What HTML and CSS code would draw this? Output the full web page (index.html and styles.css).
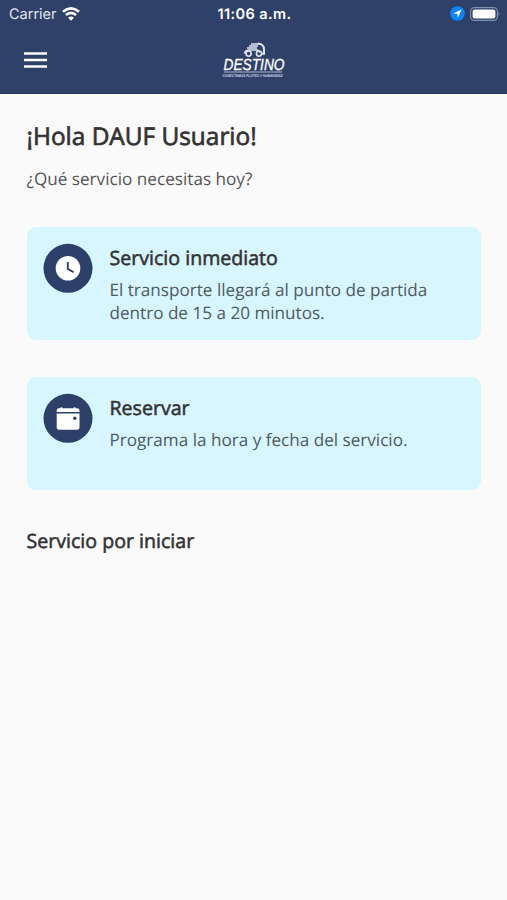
FILE: index.html
```html
<!DOCTYPE html>
<html lang="es">
<head>
<meta charset="utf-8">
<meta name="viewport" content="width=device-width, initial-scale=1">
<title>Destino</title>
<link rel="stylesheet" href="styles.css">
</head>
<body>
<header class="header">
  <div class="status">
    <div class="status-left">
      <span class="carrier">Carrier</span>
      <svg class="wifi" width="18" height="14" viewBox="0 0 18 14" fill="none" stroke="#fff" stroke-width="2.6">
        <path d="M1 4.8Q9-2.1 17 4.8M3.9 8.1Q9 3.7 14.1 8.1"/>
        <path d="M9 13.8L6.1 10.7Q9 8.2 11.9 10.7Z" fill="#fff" stroke="none"/>
      </svg>
    </div>
    <span class="time">11:06 a.m.</span>
    <div class="status-right">
      <svg width="15" height="15" viewBox="0 0 15 15"><circle cx="7.5" cy="7.5" r="7.3" fill="#0b84fe"/><path d="M11.6 3.4L3 7.4L7.3 7.8L7.7 12Z" fill="#fff"/></svg>
      <svg width="30" height="14" viewBox="0 0 30 14"><rect x=".6" y=".6" width="26.8" height="12.8" rx="3.8" fill="none" stroke="#8390ad" stroke-width="1.1"/><rect x="2.6" y="2.5" width="22.8" height="9" rx="2.2" fill="#fff"/><path d="M28.5 4.8Q30.4 7 28.5 9.2Z" fill="#8390ad"/></svg>
    </div>
  </div>
  <div class="toolbar">
    <svg class="menu" width="23" height="16" viewBox="0 0 23 16"><path d="M0 1.5H23M0 8H23M0 14.5H23" stroke="#fff" stroke-width="2.6"/></svg>
    <svg class="logo" width="66" height="38" viewBox="0 0 66 38">
      <g fill="none" stroke="#dfe6f4">
        <path d="M23.5 12.5Q24 9.3 28 9H36L39 11" stroke-width="1.7"/>
        <path d="M26 7H36M28 5H37M30 3H39" stroke-width="1.3"/>
        <path d="M37 2.4Q43.2 3 43 8.5V12.7H41" stroke-width="2"/>
        <circle cx="27.6" cy="12.6" r="2.6" stroke-width="1.6"/><circle cx="38" cy="12.6" r="2.6" stroke-width="1.6"/>
      </g>
      <text class="logo-name" x="2.5" y="29" textLength="61" lengthAdjust="spacingAndGlyphs">DESTINO</text>
      <path d="M3 31H61" stroke="#c9d2e5" stroke-width=".8"/>
      <text class="logo-tag" x="1.5" y="35.6" textLength="60" lengthAdjust="spacingAndGlyphs">CONECTAMOS FLOTES Y HUMANIDAD</text>
    </svg>
  </div>
</header>
<main class="content">
  <h1 class="greeting">¡Hola DAUF Usuario!</h1>
  <p class="question">¿Qué servicio necesitas hoy?</p>
  <section class="card">
    <svg class="icon" width="50" height="50" viewBox="0 0 50 50"><circle cx="25" cy="25.3" r="24.5" fill="#2d4069"/><circle cx="25" cy="25.3" r="12.3" fill="#fff"/><path d="M24.8 19.1V25.9L30.6 29.3" fill="none" stroke="#2d4069" stroke-width="1.9"/></svg>
    <div class="card-text">
      <h2 class="heading">Servicio inmediato</h2>
      <p class="description">El transporte llegará al punto de partida<br>dentro de 15 a 20 minutos.</p>
    </div>
  </section>
  <section class="card">
    <svg class="icon" width="50" height="50" viewBox="0 0 50 50"><circle cx="25" cy="25.3" r="24.5" fill="#2d4069"/><path d="M13.7 19V17.5Q13.7 15.2 16 15.2H17.6V14.2H19.3V15.2H30.7V14.2H32.4V15.2H34Q36.5 15.2 36.5 17.5V19ZM13.7 20.5H36.5V34Q36.5 36.7 34 36.7H16Q13.7 36.7 13.7 34Z" fill="#fff"/><circle cx="31.8" cy="25.2" r="1.7" fill="#2d4069"/></svg>
    <div class="card-text">
      <h2 class="heading">Reservar</h2>
      <p class="description">Programa la hora y fecha del servicio.</p>
    </div>
  </section>
  <h2 class="heading pending">Servicio por iniciar</h2>
</main>
</body>
</html>
```
FILE: styles.css
```css
* { box-sizing: border-box; }
body {
  margin: 0;
  min-height: 900px;
  background: #fafafa;
  color: #333;
  font-family: "Open Sans", sans-serif;
  text-rendering: geometricPrecision;
}
h1, h2, p { margin: 0; font-weight: 400; }
svg { display: block; flex: none; }
.header { height: 94px; background: #2f4168; border-bottom: 1px solid #26385f; }
.status {
  height: 27px;
  padding: 0 7px 0 9px;
  display: grid;
  grid-template-columns: 1fr auto 1fr;
  align-items: center;
  color: #fff;
  font-family: Inter, sans-serif;
}
.status-left, .status-right { display: flex; align-items: center; }
.status-left { gap: 5px; }
.status-right { justify-content: flex-end; gap: 5px; }
.carrier { padding-top: 1px; font-size: 14.5px; color: #e3e7f0; }
.time { padding-top: 1px; font-size: 14.5px; font-weight: 600; letter-spacing: .4px; }
.toolbar {
  height: 66px;
  padding: 0 24px;
  display: grid;
  grid-template-columns: 1fr auto 1fr;
  align-items: center;
}
.logo { overflow: visible; }
.logo-name { font: italic 16px "Liberation Sans", sans-serif; fill: #fff; stroke: #fff; stroke-width: .3px; }
.logo-tag { font: italic bold 4px "Liberation Sans", sans-serif; fill: #d5dced; }
.content { padding: 26px 26px 0 26.5px; }
.greeting { font-size: 24.4px; line-height: 34px; -webkit-text-stroke: .7px #333; }
.question { margin-top: 14px; font-size: 17.15px; line-height: 24px; color: #555; }
.card {
  display: flex;
  gap: 17px;
  height: 113px;
  padding: 16px;
  border-radius: 9px;
  background: #d8f6ff;
}
.question + .card { margin-top: 35px; }
.card + .card { margin-top: 37px; }
.heading { font-size: 19.6px; line-height: 28px; -webkit-text-stroke: .55px #333; }
.card-text { padding-top: 1px; }
.description { margin-top: 7px; font-size: 17.13px; line-height: 23px; color: #4d5a5e; white-space: nowrap; }
.pending { margin-top: 37px; }
```
